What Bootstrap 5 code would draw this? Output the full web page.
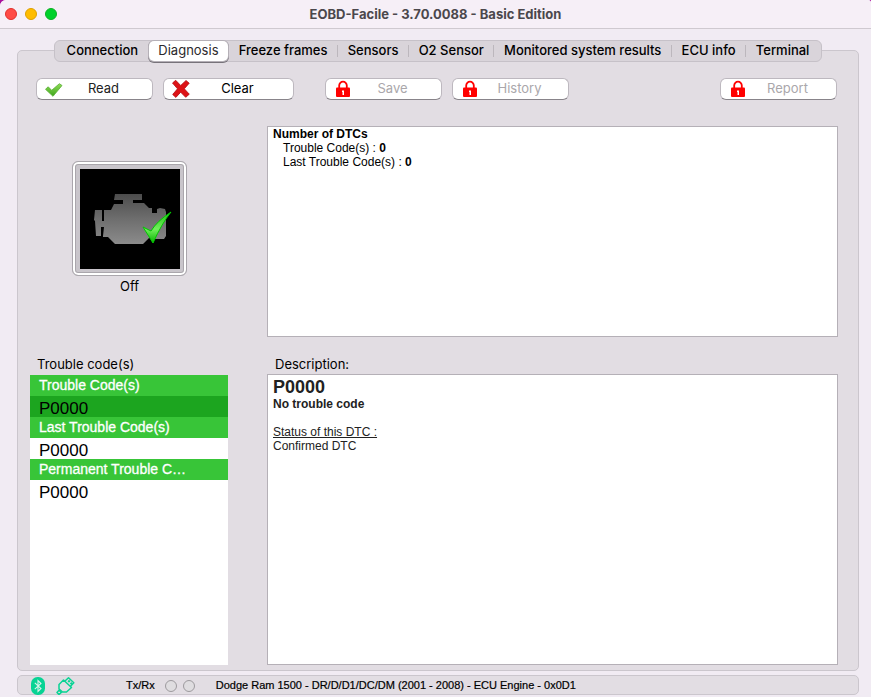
<!DOCTYPE html>
<html lang="en">
<head>
<meta charset="utf-8">
<meta name="viewport" content="width=device-width, initial-scale=1">
<title>EOBD-Facile - 3.70.0088 - Basic Edition</title>
<link href="https://cdn.jsdelivr.net/npm/bootstrap@5.3.0/dist/css/bootstrap.min.css" rel="stylesheet">
<style>
  :root { --ui: Inter, "Liberation Sans", sans-serif; --doc: "Liberation Sans", Arial, sans-serif; }
  body { background: #a8109c; font-family: var(--ui); font-size: 13px; line-height: 16px; color: #000; }
  .app-window { background: #f1ebf3; border-radius: 6px 3px 0 0; }
  .title-bar { height: 29px; background: #f6eff7; border-bottom: 1px solid #cfc9d0; border-radius: 6px 3px 0 0; padding: 0 5px; }
  .title-bar h1 { font-size: 13px; line-height: 16px; font-weight: 700; color: #4b474c; }
  .lights { gap: 8px; width: 60px; }
  .light { width: 12px; height: 12px; padding: 0; border-radius: 50%; border: 1px solid; }
  .light-close { background: #ff4b46; border-color: #e1302d; }
  .light-min { background: #ffbc00; border-color: #dea000; }
  .light-max { background: #00d12b; border-color: #0bb125; }
  .workspace { padding: 21px 12px 2px 17px; }
  .group-box { background: #e2dde3; border: 1px solid #cbc6cd; border-radius: 5px; }
  .main-box { padding: 0 20px 5px 12px; }
  .segments { height: 22px; margin: -11px 16px 0 24px; padding: 0 2px; background: #d9d4da; border: 1px solid #c6c1c8; border-radius: 6px; }
  .segments .nav-item { flex: 1 1 auto; display: flex; align-items: center; }
  .segments .nav-item + .nav-item::before { content: ""; width: 1px; height: 12px; background: #bcb7bd; }
  .segments .nav-item.current::before, .segments .nav-item.current + .nav-item::before { background: transparent; }
  .segments .nav-link { flex: 1; height: 20px; padding: 0 0 2px; border: 0; background: transparent; color: #000; font-weight: 500; line-height: 18px; white-space: nowrap; border-radius: 5px; }
  .segments .nav-link.active { background: #fff; color: #2b292c; font-weight: 400; box-shadow: 0 0 0 1px #b5b0b7, 0 1px 0 1px #77737a; }
  .toolbar { margin: 16px 1px 0 6px; gap: 10px; }
  .tool { display: flex; align-items: center; width: 117px; height: 22px; padding: 0 9px 0 7px; background: #fff; border: 1px solid #bdb8bf; border-bottom-color: #88848a; border-radius: 6px; font-size: 13px; line-height: 18px; color: #222; }
  .tool span { flex: 1; text-align: center; padding-bottom: 2px; }
  .tool svg { width: 20px; height: 20px; flex: none; }
  .tool:disabled { background: #fff; border-color: #bdb8bf; border-bottom-color: #88848a; opacity: 1; color: #aaa7ab; }
  .tool-wide { width: 131px; color: #000; }
  .tool-gap { margin-left: 21px; }
  .content-grid { display: grid; flex: 1; grid-template-columns: 198px minmax(0, 1fr); grid-template-rows: 211px auto minmax(0, 1fr); column-gap: 39px; margin-top: 26px; }
  .doc-pane { background: #fff; border: 1px solid #b5b0b7; padding: 0 5px; font-family: var(--doc); font-size: 12px; line-height: 14px; }
  .doc-pane h2 { font-size: 12px; line-height: 14px; font-weight: 700; }
  .doc-pane p { margin: 0; }
  .detail { color: #222; }
  .doc-pane.detail h2 { font-size: 18px; line-height: 22px; color: #222; padding-top: 1px; margin-bottom: -1px; }
  .counts { padding-left: 10px; }
  .mil-panel { padding-left: 1px; }
  .mil { margin-top: 35px; width: 115px; height: 115px; padding: 4px; border: 1px solid #aaa6ac; border-radius: 6px; background: #c9c5cb; box-shadow: inset 0 0 0 2px #fff, inset 0 0 0 3px #aaa6ac; }
  .mil svg { width: 100px; height: 100px; background: #000; }
  .mil-text { margin-top: 2px; }
  .pane-label { font-size: 13px; line-height: 16px; padding: 19px 0 2px 8px; }
  .pane-label-codes { padding-left: 7px; }
  .code-list { background: #fff; border-radius: 0; font-family: var(--doc); overflow: hidden; margin-top: 1px; }
  .code-list .list-group-item, .code-list .list-group-item + .list-group-item.active { height: 21px; margin: 0; padding: 0 9px; border: 0; border-radius: 0; color: #000; font-size: 17px; line-height: 25px; }
  .code-list .list-group-item.group-head { background: #38c538; color: #fff; font-size: 14px; line-height: 20px; -webkit-text-stroke: 0.3px #fff; }
  .code-list .active { background: #1ca51f; }
  .status-bar { height: 20px; margin-top: 4px; padding: 0 12px; font-family: var(--doc); font-size: 11px; line-height: 18px; -webkit-text-stroke: 0.2px #000; }
  .status-bar svg { flex: none; margin-top: 2px; }
  .links { gap: 10px; width: 96px; }
  .lamps { gap: 6px; margin: 2px 21px 0 10px; }
  .lamp { width: 12px; height: 12px; border: 1px solid #9d9a9e; border-radius: 50%; background: #dfdde0; }
</style>
<script src="https://cdn.jsdelivr.net/npm/bootstrap@5.3.0/dist/js/bootstrap.bundle.min.js" defer></script>
</head>
<body>
<svg class="d-none" aria-hidden="true">
  <symbol id="lock" viewBox="0 0 20 20">
    <path d="M6.200 10V6.500a3.800 3.800 0 0 1 7.600 0V10" fill="none" stroke="#f00" stroke-width="1.800"/>
    <path d="M3 9.400q0-1 1-1h12q1 0 1 1V17q0 1-1 1H4q-1 0-1-1z" fill="#f00"/>
    <path d="M9 11.500h2v4.500H9.500v-3H9z" fill="#fff"/>
  </symbol>
</svg>
<div class="app-window d-flex flex-column min-vh-100">
  <header class="title-bar d-flex align-items-center">
    <div class="lights d-flex">
      <button class="light light-close" type="button" aria-label="Close"></button>
      <button class="light light-min" type="button" aria-label="Minimize"></button>
      <button class="light light-max" type="button" aria-label="Zoom"></button>
    </div>
    <h1 class="flex-fill text-center m-0">EOBD-Facile - 3.70.0088 - Basic Edition</h1>
    <div class="lights"></div>
  </header>
  <main class="workspace d-flex flex-column flex-fill">
    <section class="group-box main-box d-flex flex-column flex-fill">
      <ul class="segments nav flex-nowrap" role="tablist">
        <li class="nav-item" role="presentation"><button class="nav-link" type="button" role="tab">Connection</button></li>
        <li class="nav-item current" role="presentation"><button class="nav-link active" type="button" role="tab" aria-selected="true">Diagnosis</button></li>
        <li class="nav-item" role="presentation"><button class="nav-link" type="button" role="tab">Freeze frames</button></li>
        <li class="nav-item" role="presentation"><button class="nav-link" type="button" role="tab">Sensors</button></li>
        <li class="nav-item" role="presentation"><button class="nav-link" type="button" role="tab">O2 Sensor</button></li>
        <li class="nav-item" role="presentation"><button class="nav-link" type="button" role="tab">Monitored system results</button></li>
        <li class="nav-item" role="presentation"><button class="nav-link" type="button" role="tab">ECU info</button></li>
        <li class="nav-item" role="presentation"><button class="nav-link" type="button" role="tab">Terminal</button></li>
      </ul>
      <div class="toolbar d-flex">
        <button class="tool" type="button">
          <svg viewBox="0 0 20 20" aria-hidden="true"><defs><linearGradient id="leaf" x2="0" y2="1"><stop stop-color="#8fdc55"/><stop offset="1" stop-color="#3da51c"/></linearGradient></defs><path d="M1.500 10.300 4.200 7.800 7.700 11.300 15.400 4.700 18 6.500 9 17.300z" fill="url(#leaf)" stroke="#58ad35" stroke-width=".8"/></svg>
          <span>Read</span></button>
        <button class="tool tool-wide" type="button">
          <svg viewBox="0 0 20 20" aria-hidden="true"><path d="M1.500 4 4.700 1.300 9.700 6.500 15 1.500 18.200 4.200 13.300 9.800 18.300 15.200 14.700 18.300 9.700 13.200 4.900 18.400 1.700 15.500 6.500 9.800z" fill="#dd1216" stroke="#b50b10" stroke-width=".8"/></svg>
          <span>Clear</span></button>
        <button class="tool tool-gap" type="button" disabled><svg aria-hidden="true"><use href="#lock"/></svg><span>Save</span></button>
        <button class="tool" type="button" disabled><svg aria-hidden="true"><use href="#lock"/></svg><span>History</span></button>
        <button class="tool ms-auto" type="button" disabled><svg aria-hidden="true"><use href="#lock"/></svg><span>Report</span></button>
      </div>
      <div class="content-grid">
        <div class="mil-panel text-center">
          <button class="mil" type="button" aria-labelledby="mil-text">
            <svg class="d-block mx-auto" viewBox="0 0 100 100" aria-hidden="true">
              <defs>
                <linearGradient id="metal" x1="0" y1="25" x2="0" y2="75" gradientUnits="userSpaceOnUse"><stop stop-color="#4c4c4c"/><stop offset=".5" stop-color="#6e6e6e"/><stop offset="1" stop-color="#8b8b8b"/></linearGradient>
                <linearGradient id="tick" x2="0" y2="1"><stop stop-color="#22c414"/><stop offset=".55" stop-color="#72f05c"/><stop offset="1" stop-color="#06b300"/></linearGradient>
              </defs>
              <path fill="url(#metal)" d="M35 25H62V31H53V34H64L69 39H72V44H77V40L80 39 85 40 86 43V67L84 70H73L69 69 63 75H35L28 68H23V67L24 58H21V67H16L15 52 14 51 15 41H22V52H24V41H31L34 35H43V31H34z"/>
              <path fill="url(#tick)" stroke="#00c800" stroke-width="1" d="M63 58 71 62Q77 52 91 43 82 54 73 74z"/>
            </svg>
          </button>
          <div class="mil-text" id="mil-text">Off</div>
        </div>
        <section class="doc-pane">
          <h2 class="m-0">Number of DTCs</h2>
          <div class="counts"><p>Trouble Code(s) : <b>0</b></p><p>Last Trouble Code(s) : <b>0</b></p></div>
        </section>
        <div class="pane-label pane-label-codes" id="codes-label">Trouble code(s)</div>
        <div class="pane-label" id="detail-label">Description:</div>
        <div class="code-list list-group" aria-labelledby="codes-label">
          <div class="list-group-item group-head">Trouble Code(s)</div>
          <button class="list-group-item list-group-item-action active" type="button">P0000</button>
          <div class="list-group-item group-head">Last Trouble Code(s)</div>
          <button class="list-group-item list-group-item-action" type="button">P0000</button>
          <div class="list-group-item group-head">Permanent Trouble C…</div>
          <button class="list-group-item list-group-item-action" type="button">P0000</button>
        </div>
        <section class="doc-pane detail" aria-labelledby="detail-label">
          <h2>P0000</h2>
          <p><b>No trouble code</b></p>
          <br>
          <p><u>Status of this DTC :</u></p>
          <p>Confirmed DTC</p>
        </section>
      </div>
    </section>
    <footer class="status-bar group-box d-flex align-items-center">
      <div class="links d-flex">
        <svg width="16" height="18" viewBox="0 0 16 18" role="img" aria-label="Bluetooth"><rect x="1" width="14" height="18" rx="6.500" fill="#08d394"/><path d="M4.800 5.800 11 11.500 8 14.500V3.500L11 6.500 4.800 12.200" fill="none" stroke="#d9f3e9" stroke-width="1.100"/></svg>
        <svg width="19" height="18" viewBox="0 0 19 18" role="img" aria-label="Adapter"><g fill="none" stroke="#08d394" stroke-width="1.500" stroke-linejoin="round"><path d="M9 4 12.500.8 17.800 5.800 14.300 9.500"/><path d="M7.500 3 15.500 10.500 10.500 15H6.500L3 12V7.500z"/><path d="M4.800 13 3.500 14.500M1 15.500 3 13.300 5.300 15.500 3 17.500z"/></g><path d="M11.500 4.200l1.500-1.500 1.500 1.500-1.500 1.500zM13.800 6.400l1.500-1.500 1.500 1.500-1.500 1.500z" fill="#08d394"/></svg>
      </div>
      <span>Tx/Rx</span>
      <div class="lamps d-flex"><span class="lamp"></span><span class="lamp"></span></div>
      <span>Dodge Ram 1500 - DR/D/D1/DC/DM (2001 - 2008) - ECU Engine - 0x0D1</span>
    </footer>
  </main>
</div>
</body>
</html>
